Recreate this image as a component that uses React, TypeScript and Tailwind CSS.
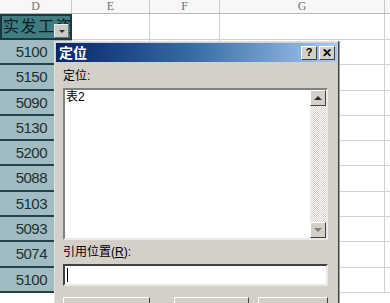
import React from "react";

const nums = ["5100", "5150", "5090", "5130", "5200", "5088", "5103", "5093", "5074", "5100"];

export default function App() {
  const font = { fontFamily: '"Liberation Sans", "Noto Sans CJK SC", sans-serif' };
  return (
    <div className="relative w-[390px] h-[303px] overflow-hidden bg-white" style={font}>
      {/* column header */}
      <div className="flex h-[14px] border-b border-[#b8b8b8] bg-[#f7f7f7] text-[12px] leading-[13px] text-[#707070]" style={{ fontFamily: '"Liberation Serif", serif' }}>
        <div className="w-[72px] border-r border-[#c8c8c8] text-center">D</div>
        <div className="w-[78px] border-r border-[#c8c8c8] text-center">E</div>
        <div className="w-[70px] border-r border-[#c8c8c8] text-center">F</div>
        <div className="w-[165px] border-r border-[#c8c8c8] text-center">G</div>
        <div className="flex-1" />
      </div>
      {/* header row */}
      <div className="flex h-[26px]">
        <div className="relative w-[72px] border-2 border-[#1c3a3e] bg-[#3f7d83] text-[16px] leading-[22px] pl-[1px] tracking-[1.5px] text-[#0c2226] overflow-hidden whitespace-nowrap">
          实发工资
          <div className="absolute right-[1px] top-[8px] w-[15px] h-[14px] bg-[#c9cbcb] border border-[#e8e8e8] border-r-[#707070] border-b-[#707070] flex items-center justify-center">
            <div className="w-0 h-0 border-l-[3px] border-r-[3px] border-t-[3px] border-l-transparent border-r-transparent border-t-[#303030]" />
          </div>
        </div>
        <div className="w-[78px] border-r border-b border-[#d0d0d0]" />
        <div className="w-[70px] border-r border-b border-[#d0d0d0]" />
        <div className="w-[165px] border-r border-b border-[#d0d0d0]" />
        <div className="flex-1 border-b border-[#d0d0d0]" />
      </div>
      {nums.map((n, i) => (
        <div key={i} className="flex h-[25.3px]">
          <div className="w-[72px] bg-[#a0bcc2] border-b-2 border-[#23424a] text-right pr-[25px] text-[15px] leading-[24px] tracking-[-0.5px] text-[#1e3034]">
            {n}
          </div>
          <div className="w-[78px] border-r border-b border-[#d0d0d0]" />
          <div className="w-[70px] border-r border-b border-[#d0d0d0]" />
          <div className="w-[165px] border-r border-b border-[#d0d0d0]" />
          <div className="flex-1 border-b border-[#d0d0d0]" />
        </div>
      ))}

      {/* dialog */}
      <div className="absolute left-[54px] top-[41px] w-[285px] h-[280px] bg-[#d4d0c8] border border-[#e4e2dc] border-r-[#404040] shadow-[1px_0_0_#a0a0a0] p-[1px]">
        <div className="flex items-center h-[19px] pl-[3px] pr-[2px] bg-gradient-to-r from-[#0a246a] via-[#3a6ea5] to-[#a6caf0]">
          <span className="text-white font-bold text-[14px] leading-[18px]">定位</span>
          <div className="ml-auto flex gap-[2px]">
            <div className="w-[16px] h-[14px] bg-[#d4d0c8] border border-white border-r-[#404040] border-b-[#404040] flex items-center justify-center text-[11px] font-bold leading-none text-black">?</div>
            <div className="w-[16px] h-[14px] bg-[#d4d0c8] border border-white border-r-[#404040] border-b-[#404040] flex items-center justify-center text-[12px] font-bold leading-none text-black">✕</div>
          </div>
        </div>
        <div className="pl-[7px] pr-[9px]">
          <div className="mt-[7px] text-[12px] leading-[14px] text-black">定位:</div>
          <div className="mt-[5px] flex h-[152px] bg-white border-2 border-[#808080] border-r-[#e8e8e8] border-b-[#e8e8e8]">
            <div className="flex-1 pl-[1px] text-[12px] leading-[15px] text-black">表2</div>
            <div className="w-[16px] flex flex-col bg-[repeating-conic-gradient(#d4d0c8_0_25%,#ffffff_0_50%)] bg-[length:2px_2px]">
              <div className="h-[16px] bg-[#d4d0c8] border border-white border-r-[#404040] border-b-[#404040] flex items-center justify-center">
                <div className="w-0 h-0 border-l-[4px] border-r-[4px] border-b-[4px] border-l-transparent border-r-transparent border-b-[#303030]" />
              </div>
              <div className="flex-1" />
              <div className="h-[16px] bg-[#d4d0c8] border border-white border-r-[#404040] border-b-[#404040] flex items-center justify-center">
                <div className="w-0 h-0 border-l-[4px] border-r-[4px] border-t-[4px] border-l-transparent border-r-transparent border-t-[#808080]" />
              </div>
            </div>
          </div>
          <div className="mt-[5px] text-[12px] leading-[14px] text-black">引用位置(<span className="underline">R</span>):</div>
          <div className="mt-[5px] h-[22px] bg-white border-2 border-[#404040] border-r-[#e8e8e8] border-b-[#e8e8e8] flex items-center pl-[2px]">
            <div className="w-[1px] h-[14px] bg-black" />
          </div>
          <div className="mt-[11px] flex">
            <div className="w-[87px] h-[24px] bg-[#d4d0c8] border border-white border-r-[#404040]" />
            <div className="ml-[24px] w-[75px] h-[24px] bg-[#d4d0c8] border border-white border-r-[#404040]" />
            <div className="ml-[9px] flex-1 h-[24px] bg-[#d4d0c8] border border-white border-r-[#404040]" />
          </div>
        </div>
      </div>
    </div>
  );
}
